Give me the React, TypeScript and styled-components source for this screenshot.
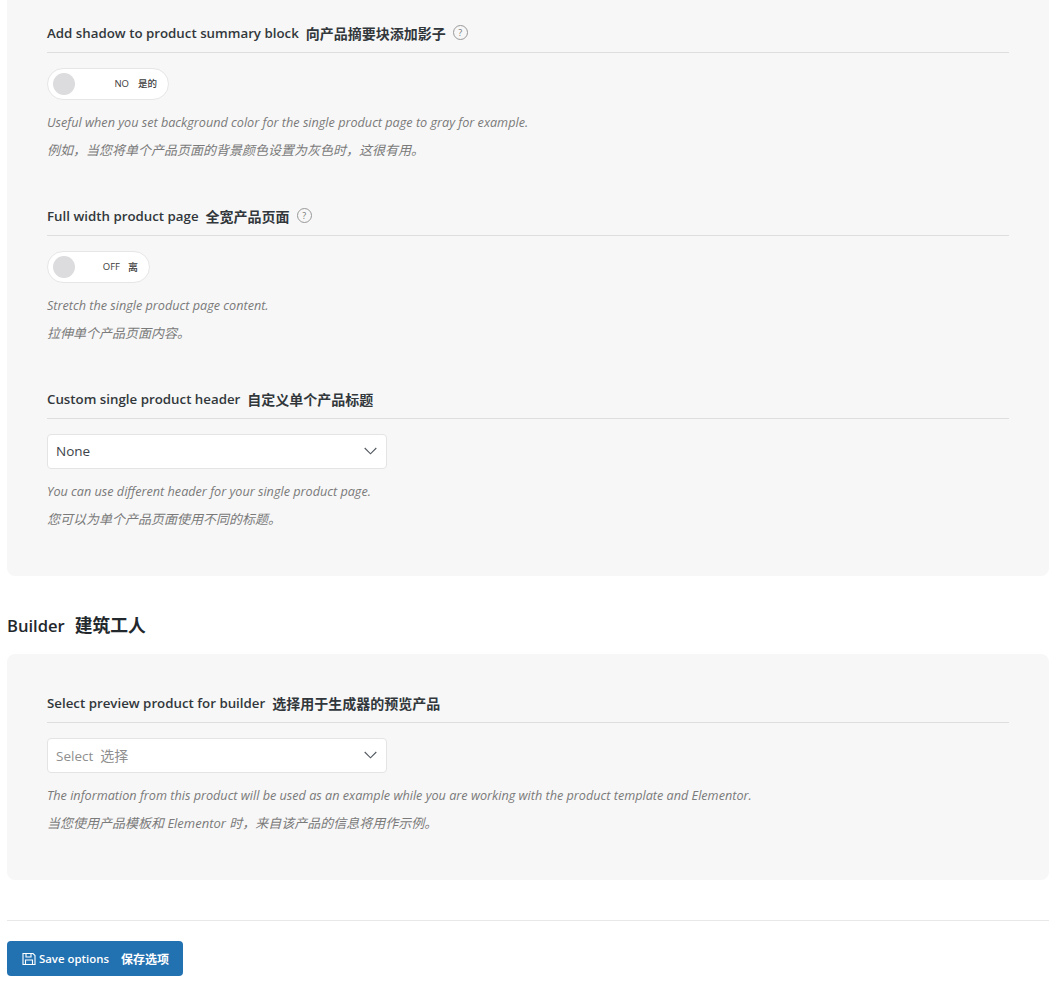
import styled, { createGlobalStyle } from "styled-components";

const GlobalStyle = createGlobalStyle`
  html, body {
    margin: 0;
    padding: 0;
    background: #fff;
    font-family: "Open Sans", "Noto Sans CJK SC", sans-serif;
    color: #32373c;
  }
`;

const Page = styled.div`
  padding: 0 9px 8px 7px;
`;

const Panel = styled.section`
  background: #f7f7f7;
  border-radius: 0 0 8px 8px;
  padding: 23px 40px 43px;

  & + h2 {
    margin-top: 37px;
  }
`;

const RoundPanel = styled(Panel)`
  border-radius: 8px;
  padding-top: 39px;
`;

const Field = styled.div`
  & + & {
    margin-top: 42px;
  }
`;

const Cjk = styled.span<{ $size: number; $gap?: number }>`
  font-size: ${(p) => p.$size}px;
  margin-left: ${(p) => p.$gap ?? 7}px;
`;

const FieldTitle = styled.div`
  display: flex;
  align-items: center;
  box-sizing: content-box;
  height: 19px;
  padding-bottom: 10px;
  border-bottom: 1px solid #dedede;
  font-size: 13.3px;
  font-weight: 600;
  color: #32373c;
  white-space: pre;
`;

const Help = styled.span`
  display: inline-flex;
  align-items: center;
  justify-content: center;
  box-sizing: border-box;
  width: 15px;
  height: 15px;
  margin-left: 7px;
  border: 1px solid #999;
  border-radius: 50%;
  font-size: 9px;
  font-weight: 400;
  color: #777;
`;

const Toggle = styled.div<{ $width: number }>`
  display: flex;
  align-items: center;
  justify-content: flex-end;
  box-sizing: border-box;
  width: ${(p) => p.$width}px;
  height: 32px;
  margin-top: 15px;
  padding: 0 11px 0 5px;
  background: #fff;
  border: 1px solid #e6e6e6;
  border-radius: 16px;
  font-size: 9.5px;
  font-weight: 500;
  line-height: 28px;
  color: #3c3c3c;
  white-space: pre;
`;

const Knob = styled.span`
  width: 22px;
  height: 22px;
  margin-right: auto;
  background: #dcdcde;
  border-radius: 50%;
`;

const Select = styled.div<{ $placeholder?: boolean }>`
  display: flex;
  align-items: center;
  justify-content: space-between;
  box-sizing: border-box;
  width: 340px;
  height: 35px;
  margin-top: 15px;
  padding: 0 9px 2px 8px;
  background: #fff;
  border: 1px solid #e4e4e4;
  border-radius: 4px;
  font-size: 13.5px;
  color: ${(p) => (p.$placeholder ? "#8f8f8f" : "#3c434a")};
  white-space: pre;
`;

const Desc = styled.p`
  margin: 0;
  height: 27.5px;
  font-size: 12.65px;
  line-height: 27.5px;
  font-style: italic;
  color: #7a7a7a;
  white-space: pre;

  &:first-of-type {
    margin-top: 9px;
  }
`;

const CjkDesc = styled(Desc)`
  font-size: 13px;
`;

const SectionTitle = styled.h2`
  margin: 0 0 17px;
  height: 24px;
  line-height: 24px;
  font-size: 16.6px;
  font-weight: 600;
  color: #23282d;
  white-space: pre;
`;

const Divider = styled.hr`
  margin: 40px 0 20px;
  border: 0;
  border-top: 1px solid #e8e8e8;
`;

const SaveButton = styled.button`
  display: flex;
  align-items: center;
  width: 176px;
  height: 35px;
  padding: 0 0 0 15px;
  background: #2271b1;
  border: 0;
  border-radius: 4px;
  font-family: inherit;
  font-size: 11.4px;
  font-weight: 600;
  color: #fff;
  white-space: pre;

  svg {
    margin-right: 3px;
  }
`;

function Chevron() {
  return (
    <svg width="13" height="8" viewBox="0 0 13 8" fill="none">
      <path d="M.7 1l5.8 5.8L12.3 1" stroke="#50575e" strokeWidth="1.1" />
    </svg>
  );
}

function SaveIcon() {
  return (
    <svg width="14" height="14" viewBox="0 0 14 14" fill="none" stroke="#fff" strokeWidth="1.1">
      <path d="M1 1.5h10l2 2v9H1z" />
      <path d="M4 1.5v3.5h5V1.5M3.5 12.5V8h7v4.5" />
    </svg>
  );
}

export default function App() {
  return (
    <Page>
      <GlobalStyle />
      <Panel>
        <Field>
          <FieldTitle>
            Add shadow to product summary block<Cjk $size={14}>向产品摘要块添加影子</Cjk>
            <Help>?</Help>
          </FieldTitle>
          <Toggle $width={122}>
            <Knob />
            NO<Cjk $size={9.5} $gap={9}>是的</Cjk>
          </Toggle>
          <Desc>Useful when you set background color for the single product page to gray for example.</Desc>
          <CjkDesc>例如，当您将单个产品页面的背景颜色设置为灰色时，这很有用。</CjkDesc>
        </Field>
        <Field>
          <FieldTitle>
            Full width product page<Cjk $size={14}>全宽产品页面</Cjk>
            <Help>?</Help>
          </FieldTitle>
          <Toggle $width={103}>
            <Knob />
            OFF<Cjk $size={10} $gap={8}>离</Cjk>
          </Toggle>
          <Desc>Stretch the single product page content.</Desc>
          <CjkDesc>拉伸单个产品页面内容。</CjkDesc>
        </Field>
        <Field>
          <FieldTitle>
            Custom single product header<Cjk $size={14}>自定义单个产品标题</Cjk>
          </FieldTitle>
          <Select>
            None
            <Chevron />
          </Select>
          <Desc>You can use different header for your single product page.</Desc>
          <CjkDesc>您可以为单个产品页面使用不同的标题。</CjkDesc>
        </Field>
      </Panel>
      <SectionTitle>
        Builder<Cjk $size={17.75} $gap={10}>建筑工人</Cjk>
      </SectionTitle>
      <RoundPanel>
        <Field>
          <FieldTitle>
            Select preview product for builder<Cjk $size={14}>选择用于生成器的预览产品</Cjk>
          </FieldTitle>
          <Select $placeholder>
            <span>
              Select<Cjk $size={14}>选择</Cjk>
            </span>
            <Chevron />
          </Select>
          <Desc>The information from this product will be used as an example while you are working with the product template and Elementor.</Desc>
          <CjkDesc>当您使用产品模板和 Elementor 时，来自该产品的信息将用作示例。</CjkDesc>
        </Field>
      </RoundPanel>
      <Divider />
      <SaveButton>
        <SaveIcon />
        Save options<Cjk $size={12} $gap={12}>保存选项</Cjk>
      </SaveButton>
    </Page>
  );
}
